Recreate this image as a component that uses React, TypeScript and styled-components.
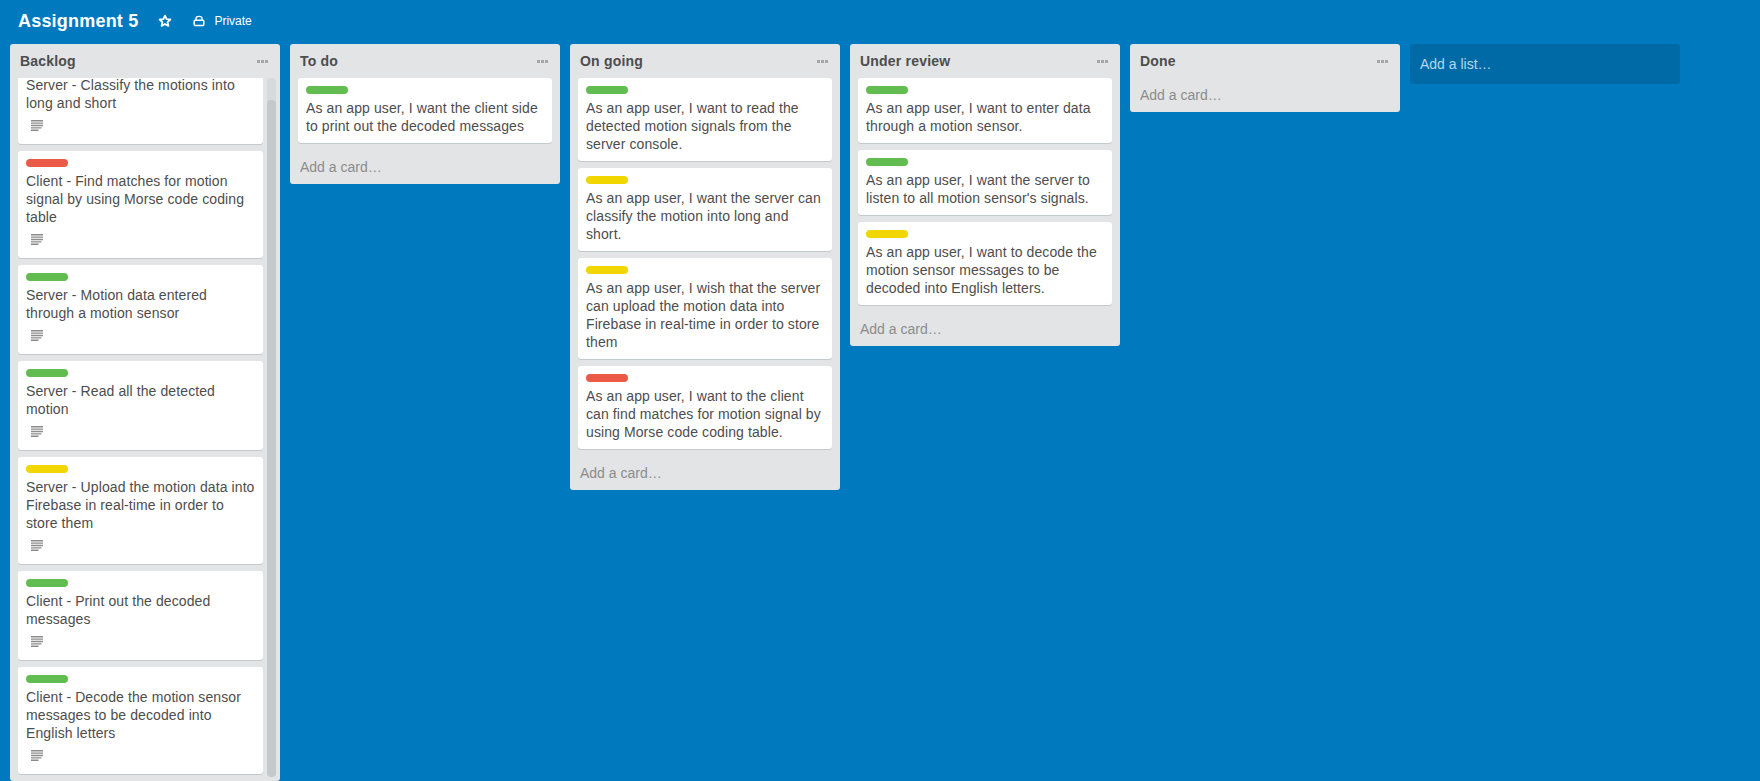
import styled, { createGlobalStyle } from 'styled-components'

type LabelColor = 'green' | 'yellow' | 'red'

interface CardData {
  label: LabelColor
  text: string
  hasDescription?: boolean
}

interface ListData {
  title: string
  cards: CardData[]
}

const labelColors: Record<LabelColor, string> = {
  green: '#61bd4f',
  yellow: '#f2d600',
  red: '#eb5a46',
}

const backlog: CardData[] = [
  { label: 'green', text: 'Server - Classify the motions into long and short', hasDescription: true },
  { label: 'red', text: 'Client - Find matches for motion signal by using Morse code coding table', hasDescription: true },
  { label: 'green', text: 'Server - Motion data entered through a motion sensor', hasDescription: true },
  { label: 'green', text: 'Server - Read all the detected motion', hasDescription: true },
  { label: 'yellow', text: 'Server - Upload the motion data into Firebase in real-time in order to store them', hasDescription: true },
  { label: 'green', text: 'Client - Print out the decoded messages', hasDescription: true },
  { label: 'green', text: 'Client - Decode the motion sensor messages to be decoded into English letters', hasDescription: true },
]

const lists: ListData[] = [
  {
    title: 'To do',
    cards: [{ label: 'green', text: 'As an app user, I want the client side to print out the decoded messages' }],
  },
  {
    title: 'On going',
    cards: [
      { label: 'green', text: 'As an app user, I want to read the detected motion signals from the server console.' },
      { label: 'yellow', text: 'As an app user, I want the server can classify the motion into long and short.' },
      { label: 'yellow', text: 'As an app user, I wish that the server can upload the motion data into Firebase in real-time in order to store them' },
      { label: 'red', text: 'As an app user, I want to the client can find matches for motion signal by using Morse code coding table.' },
    ],
  },
  {
    title: 'Under review',
    cards: [
      { label: 'green', text: 'As an app user, I want to enter data through a motion sensor.' },
      { label: 'green', text: "As an app user, I want the server to listen to all motion sensor's signals." },
      { label: 'yellow', text: 'As an app user, I want to decode the motion sensor messages to be decoded into English letters.' },
    ],
  },
  { title: 'Done', cards: [] },
]

function StarIcon() {
  return (
    <svg width="14" height="14" viewBox="0 0 14 14">
      <path d="M7 1.6l1.6 3.5 3.8.4-2.8 2.6.8 3.8L7 10l-3.4 1.9.8-3.8-2.8-2.6 3.8-.4z" fill="none" stroke="#fff" strokeWidth="1.8" strokeLinejoin="round" />
    </svg>
  )
}

function LockIcon() {
  return (
    <svg width="12" height="12" viewBox="0 0 12 12">
      <path d="M3 5.5V3.4C3 2 4 1.4 6 1.4s3 .6 3 2v2.1" fill="none" stroke="#fff" strokeWidth="1.4" />
      <rect x="1.2" y="5.2" width="9.6" height="5.4" rx="1" fill="none" stroke="#fff" strokeWidth="1.5" />
    </svg>
  )
}

function MenuDots() {
  return (
    <svg width="11" height="3" viewBox="0 0 11 3">
      <path d="M0 0h3v3H0zM4 0h3v3H4zM8 0h3v3H8z" fill="#a6a6a6" />
    </svg>
  )
}

function DescriptionIcon() {
  return (
    <svg width="12" height="11" viewBox="0 0 12 11">
      <path d="M0 0h12v1.4H0zM0 2.4h12v1.4H0zM0 4.8h12v1.4H0zM0 7.2h10.5v1.4H0zM0 9.6h7.5V11H0z" fill="#8c8c8c" />
    </svg>
  )
}

function TaskCard({ card }: { card: CardData }) {
  return (
    <Card>
      <Label $color={labelColors[card.label]} />
      <CardText>{card.text}</CardText>
      {card.hasDescription && (
        <Badges>
          <DescriptionIcon />
        </Badges>
      )}
    </Card>
  )
}

function ListHeader({ title }: { title: string }) {
  return (
    <Header>
      <ListTitle>{title}</ListTitle>
      <MenuDots />
    </Header>
  )
}

function App() {
  return (
    <Page>
      <GlobalStyle />
      <BoardHeader>
        <BoardTitle>Assignment 5</BoardTitle>
        <StarButton>
          <StarIcon />
        </StarButton>
        <Visibility>
          <LockIcon />
          Private
        </Visibility>
      </BoardHeader>
      <Board>
        <List>
          <ListHeader title="Backlog" />
          <ScrollArea>
            <ScrolledCards>
              {backlog.map((card) => (
                <TaskCard key={card.text} card={card} />
              ))}
            </ScrolledCards>
            <ScrollTrack>
              <ScrollThumb />
            </ScrollTrack>
          </ScrollArea>
        </List>
        {lists.map((list) => (
          <List key={list.title}>
            <ListHeader title={list.title} />
            {list.cards.length > 0 && (
              <Cards>
                {list.cards.map((card) => (
                  <TaskCard key={card.text} card={card} />
                ))}
              </Cards>
            )}
            <AddCard>Add a card…</AddCard>
          </List>
        ))}
        <AddList>Add a list…</AddList>
      </Board>
    </Page>
  )
}

const GlobalStyle = createGlobalStyle`
  html,
  body {
    margin: 0;
    height: 100%;
    overflow: hidden;
  }

  body {
    font-family: 'Liberation Sans', Arial, sans-serif;
    font-size: 14px;
    line-height: 18px;
    color: #4d4d4d;
  }
`

const Page = styled.div`
  height: 781px;
  overflow: hidden;
  background: #0079bf;
`

const BoardHeader = styled.header`
  display: flex;
  align-items: center;
  height: 44px;
  padding: 0 0 2px 18px;
  box-sizing: border-box;
  color: #fff;
`

const BoardTitle = styled.h1`
  margin: 0;
  font-size: 18px;
  line-height: 24px;
  font-weight: 700;
  letter-spacing: 0.2px;
`

const StarButton = styled.span`
  display: flex;
  margin-left: 20px;
`

const Visibility = styled.span`
  display: flex;
  align-items: center;
  gap: 9px;
  margin-left: 21px;
  font-size: 12px;
`

const Board = styled.main`
  display: flex;
  align-items: flex-start;
  gap: 10px;
  padding-left: 10px;
`

const List = styled.section`
  flex: none;
  width: 270px;
  background: #e2e4e6;
  border-radius: 3px;
`

const Header = styled.div`
  display: flex;
  align-items: center;
  justify-content: space-between;
  height: 34px;
  padding: 0 12px 0 10px;
  box-sizing: border-box;
`

const ListTitle = styled.h2`
  margin: 0;
  font-size: 14px;
  line-height: 18px;
  font-weight: 700;
  letter-spacing: 0.2px;
`

const ScrollArea = styled.div`
  display: flex;
  gap: 4px;
  height: 703px;
  padding-left: 8px;
  overflow: hidden;
`

const ScrolledCards = styled.div`
  flex: none;
  width: 245px;
  margin-top: -23px;
`

const ScrollTrack = styled.div`
  display: flex;
  flex-direction: column;
  flex: none;
  width: 9px;
  height: 699px;
  background: #d6dadc;
  border-radius: 4px;
`

const ScrollThumb = styled.div`
  flex: 1;
  margin-top: 22px;
  background: #c4c9cc;
  border-radius: 4px;
`

const Cards = styled.div`
  padding: 0 8px;
`

const Card = styled.article`
  margin-bottom: 7px;
  padding: 8px;
  background: #fff;
  border-radius: 3px;
  box-shadow: 0 1px 0 #c4c9cc;
`

const Label = styled.div<{ $color: string }>`
  width: 42px;
  height: 8px;
  margin-bottom: 5px;
  background: ${(p) => p.$color};
  border-radius: 4px;
`

const CardText = styled.div`
  font-size: 14px;
  line-height: 18px;
  letter-spacing: 0.1px;
  color: #4d4d4d;
`

const Badges = styled.div`
  display: flex;
  align-items: center;
  height: 24px;
  box-sizing: border-box;
  padding: 3px 0 0 5px;
`

const AddCard = styled.div`
  height: 34px;
  padding: 0 10px;
  box-sizing: border-box;
  line-height: 34px;
  color: #8c8c8c;
`

const AddList = styled.div`
  flex: none;
  width: 270px;
  height: 40px;
  padding: 0 10px;
  box-sizing: border-box;
  background: #006aa7;
  border-radius: 3px;
  color: #b3d7ec;
  line-height: 40px;
`

export default App
